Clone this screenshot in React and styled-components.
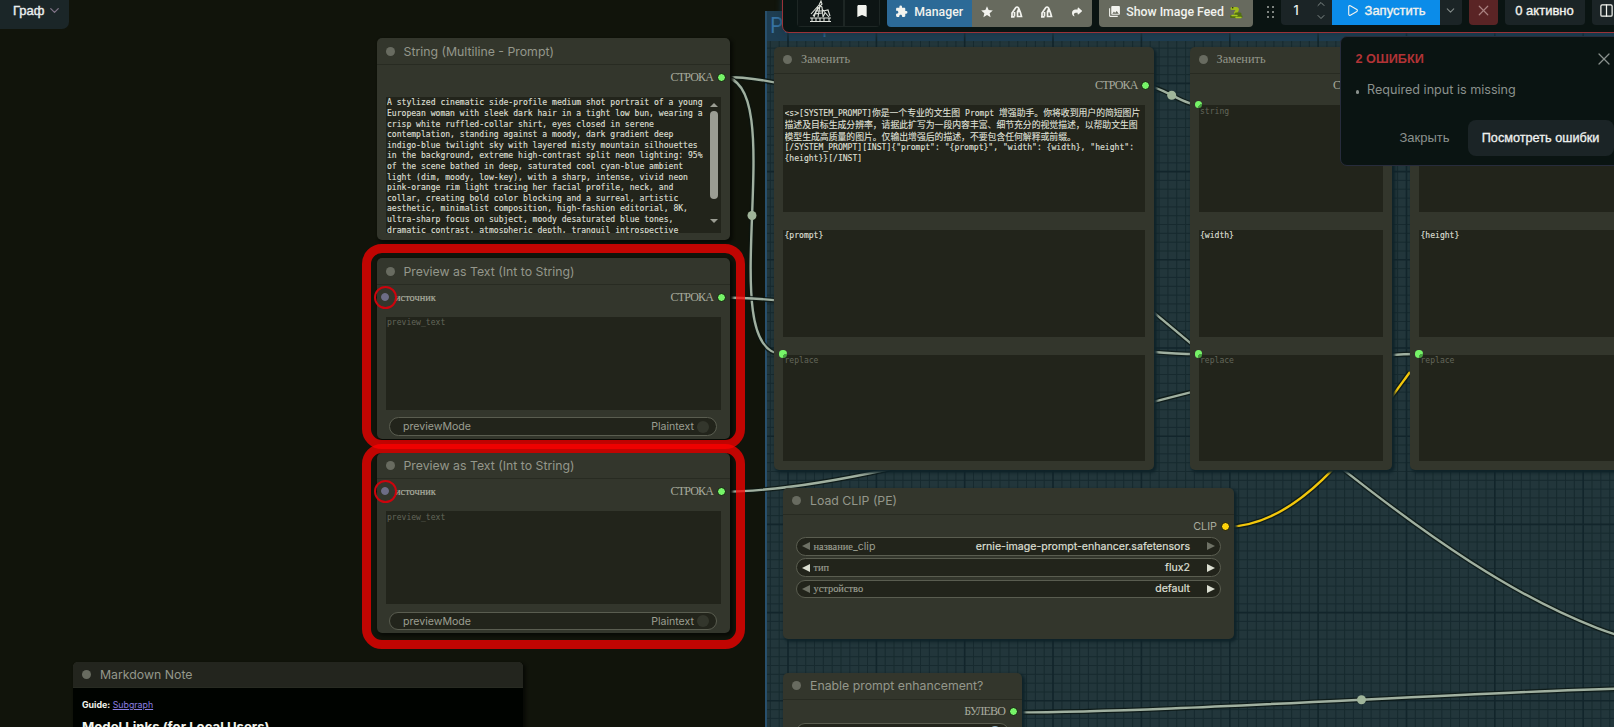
import React from 'react';
import styled, { createGlobalStyle, css } from 'styled-components';
import { ChevronDown, ChevronUp, Columns2, Play, X } from 'lucide-react';
import { MdBookmark, MdExtension, MdPhotoLibrary, MdStar } from 'react-icons/md';
import { FaShare } from 'react-icons/fa6';

const GlobalStyle = createGlobalStyle`
  * {
    box-sizing: border-box;
  }

  body {
    margin: 0;
    overflow: hidden;
    background: #11140b;
    font-family: Inter, 'Liberation Sans', sans-serif;
  }
`;

const Canvas = styled.main`
  position: relative;
  width: 1614px;
  height: 727px;
  overflow: hidden;
  background: #11140b;
`;

// free canvas: group, links and nodes sit at their graph coordinates
const Group = styled.section`
  position: absolute;
  left: 765px;
  top: 11px;
  right: 0;
  bottom: 0;
  border-left: 2px solid #28506d;
  background: #22363b;
`;

const GroupTitle = styled.h2`
  height: 30px;
  margin: 0;
  padding-left: 3px;
  background: #1e3d51;
  color: #3672a2;
  font-size: 21px;
  font-weight: 400;
  line-height: 29px;
`;

const Links = styled.svg`
  position: absolute;
  inset: 0;
`;

const Node = styled.section`
  position: absolute;
  left: ${props => props.$x}px;
  top: ${props => props.$y}px;
  width: ${props => props.$w}px;
  height: ${props => props.$h}px;
  border-radius: 5px;
  background: #33362c;
  box-shadow: 2px 2px 3px 1px ${props => (props.$inGroup ? '#0f2329' : '#090b06')};
`;

const NodeHeader = styled.header`
  display: flex;
  align-items: center;
  height: 26.5px;
  padding-left: 9px;
  gap: 9px;
  border-bottom: 1px solid #282b22;
  border-radius: 5px 5px 0 0;
  background: ${props => (props.$note ? '#23251e' : 'transparent')};
  color: #94978b;
  font-size: 12.3px;
  white-space: nowrap;

  &::before {
    content: '';
    width: 9px;
    height: 9px;
    border-radius: 50%;
    background: #686b60;
  }

  ${props =>
    props.$serif &&
    css`
      font-family: 'Liberation Serif', serif;
    `};
`;

const Slots = styled.div`
  position: relative;
  display: flex;
  align-items: center;
  justify-content: space-between;
  height: 24.5px;
  padding: 0 16.5px 0 18.5px;
  color: #a8ab9e;
  font-size: 10.8px;
`;

const InLabel = styled.span`
  font-family: 'Liberation Serif', serif;
  font-size: 10.4px;
  -webkit-text-stroke: 0.2px #a8ab9e;
`;

const OutLabel = styled.span`
  margin-left: auto;
  ${props =>
    !props.$latin &&
    css`
      font-family: 'Liberation Serif', serif;
      font-size: 12px;
      letter-spacing: -0.85px;
    `};
`;

const Port = styled.i`
  position: absolute;
  left: ${props => (props.$in ? '4.5px' : 'auto')};
  right: ${props => (props.$in ? 'auto' : '4px')};
  top: calc(50% - 4.5px);
  width: 9px;
  height: 9px;
  border: 1px solid #12150d;
  border-radius: 50%;
  background: ${props => props.$color || '#76f468'};
`;

const MutedPort = styled(Port)`
  border-color: #6d6d86;
  background: #6d6d86;
  width: 8px;
  height: 8px;
`;

const Fields = styled.div`
  display: flex;
  flex-direction: column;
  gap: 18px;
  padding: ${props => props.$top}px 9px 0;
`;

const Field = styled.div`
  position: relative;
  height: ${props => props.$h}px;
  padding: 1.5px 1px 0 1.5px;
  background: #22241b;
  color: ${props => (props.$empty ? '#63665a' : '#dcdfd2')};
  font-family: 'DejaVu Sans Mono', 'Noto Sans CJK SC', monospace;
  font-size: 8.07px;
  line-height: 10.6px;
  -webkit-text-stroke: ${props => (props.$empty ? '0' : '0.15px #dcdfd2')};
`;

const FieldText = styled.div`
  height: 100%;
  overflow: hidden;
  white-space: pre;
`;

const CjkLine = styled.div`
  height: 12.2px;
  font-family: 'Noto Sans CJK SC', sans-serif;
  font-size: 8.83px;
  line-height: 12.2px;
`;

const Latin = styled.span`
  font-family: 'DejaVu Sans Mono', monospace;
  font-size: 8.07px;
`;

const FieldPort = styled.i`
  position: absolute;
  left: -4px;
  top: -4.5px;
  width: 7.5px;
  height: 7.5px;
  border-radius: 50%;
  background: radial-gradient(circle at 90% 90%, #48a040 35%, #76f468 37%);
`;

const Scrollbar = styled.div`
  position: absolute;
  top: 0;
  right: 2px;
  bottom: 0;
  display: flex;
  flex-direction: column;
  align-items: center;
  width: 9px;
  padding-top: 6px;
`;

const ScrollArrow = styled.i`
  border: 4px solid transparent;
  border-top-width: 0;
  border-bottom: 4.5px solid #9b9d93;
  transform: ${props => (props.$down ? 'rotate(180deg)' : 'none')};
`;

const Thumb = styled.i`
  width: 8.5px;
  height: 88px;
  margin: 4.5px 0 20px;
  border-radius: 5px;
  background: #9b9d93;
`;

const Widgets = styled.div`
  display: flex;
  flex-direction: column;
  gap: 2.8px;
  margin-top: ${props => props.$top}px;
  padding: 0 12.5px;
`;

const Pill = styled.div`
  position: relative;
  display: flex;
  align-items: center;
  height: 18.3px;
  padding: ${props => (props.$combo ? '0 5px' : '0 7px 0 13px')};
  border: 1px solid #5a5d50;
  border-radius: 10px;
  background: #22241b;
  color: #9b9e91;
  font-size: 10.6px;
`;

const PillLabel = styled.span`
  flex: 1;
`;

const Serif = styled.span`
  font-family: 'Liberation Serif', serif;
  font-size: 10.4px;
  -webkit-text-stroke: 0.15px #9b9e91;
`;

const PillValue = styled.span`
  color: ${props => (props.$bright ? '#dcdfd2' : '#9b9e91')};
  -webkit-text-stroke: ${props => (props.$bright ? '0.2px #dcdfd2' : '0')};
  margin-right: ${props => (props.$bright ? '17px' : '3px')};
`;

const Knob = styled.i`
  width: 12px;
  height: 12px;
  border-radius: 50%;
  background: ${props => (props.$on ? '#8cabbd' : '#33362c')};
`;

const Arrow = styled.i`
  border: 4.3px solid transparent;
  border-width: 4.3px 0;
  ${props =>
    props.$left
      ? css`
          border-right: 8.5px solid ${props.$dim ? '#6e7165' : '#dcdfd2'};
          margin-right: 4px;
        `
      : css`
          border-left: 8.5px solid ${props.$dim ? '#6e7165' : '#dcdfd2'};
        `};
`;

const Frame = styled.div`
  position: absolute;
  left: 362px;
  top: ${props => props.$y}px;
  width: 383px;
  height: 205px;
  border: 9px solid rgba(255, 0, 0, 0.74);
  border-radius: 20px;
`;

const Ring = styled.div`
  position: absolute;
  left: 374px;
  top: ${props => props.$y}px;
  width: 23px;
  height: 23px;
  border: 2px solid #cc040d;
  border-radius: 50%;
`;

const NoteBody = styled.div`
  height: 60px;
  padding: 9.5px 9px;
  background: #000300;
  color: #f1f3ec;
  font-size: 8.8px;
  line-height: 13px;

  a {
    color: #8a7fe0;
  }

  h1 {
    margin: 8.5px 0 0;
    font-size: 13.2px;
    line-height: 16px;
    white-space: nowrap;
  }
`;

const GraphTab = styled.button`
  position: absolute;
  left: 0;
  top: 0;
  display: flex;
  align-items: center;
  gap: 3px;
  width: 69px;
  height: 29px;
  padding: 0 0 8px 13px;
  border: 0;
  border-radius: 0 0 7px 0;
  background: #1b2628;
  color: #e9eeee;
  font: 13px 'Liberation Sans', sans-serif;
  -webkit-text-stroke: 0.4px #e9eeee;
`;

const Toolbar = styled.nav`
  position: absolute;
  left: 782px;
  top: -5px;
  display: flex;
  width: 850px;
  height: 38px;
  padding: 0 0 0 14px;
  border: 1px solid #9a3238;
  border-radius: 0 0 0 7px;
  background: #0a1412;
  box-shadow: 0 2px 6px #193748;
`;

const BarGroup = styled.div`
  display: flex;
  height: ${props => props.$h || 31}px;
  margin-right: ${props => props.$gap || 7}px;
  border-radius: 0 0 4px 4px;
  overflow: hidden;
`;

const BarButton = styled.button`
  display: flex;
  align-items: center;
  justify-content: center;
  gap: ${props => props.$gap || 6}px;
  width: ${props => props.$w}px;
  padding: 0;
  border: 0;
  background: ${props => props.$bg || '#0d1514'};
  color: ${props => props.$color || '#f2f3ee'};
  font: ${props => (props.$ru ? "13px 'Liberation Sans', sans-serif" : '500 12.3px Roboto, sans-serif')};
  white-space: nowrap;
  -webkit-text-stroke: ${props => (props.$ru ? '0.35px currentColor' : '0')};

  svg {
    flex: none;
  }
`;

const DarkButton = styled(BarButton)`
  border: 1px solid #1d2624;
  border-top: 0;
`;

const Handle = styled.div`
  display: grid;
  grid-template-columns: 2px 2px;
  grid-auto-rows: 2px;
  gap: 3px;
  align-content: center;
  justify-content: center;
  width: 20px;
  height: 31px;

  i {
    background: #7d837f;
  }
`;

const Counter = styled.div`
  display: flex;
  align-items: center;
  width: 51px;
  padding: 0 5px 0 13px;
  justify-content: space-between;
  background: #1b2426;
  color: #eff2f0;
  font-size: 12.5px;
  font-weight: 500;
`;

const Steps = styled.div`
  display: flex;
  flex-direction: column;
  gap: 1px;
  color: #818a88;
`;

const Toast = styled.aside`
  position: absolute;
  left: 1340px;
  top: 36px;
  display: flex;
  flex-direction: column;
  width: 290px;
  height: 130px;
  padding: 13.5px 15px 0 14.5px;
  border: 1px solid #272c3c;
  border-radius: 7px;
  background: #0a1412;
  color: #8a918d;
`;

const ToastHead = styled.div`
  display: flex;
  align-items: center;
  justify-content: space-between;
  height: 17px;
  color: #8a918d;

  strong {
    color: #b23336;
    font: bold 12.7px 'Liberation Sans', sans-serif;
  }
`;

const ToastItem = styled.div`
  display: flex;
  align-items: center;
  gap: 8px;
  height: 16px;
  margin-top: 14px;
  font-size: 12.6px;

  &::before {
    content: '';
    width: 3.5px;
    height: 3.5px;
    margin-top: 5px;
    border-radius: 50%;
    background: #8a918d;
    flex: none;
  }
`;

const ToastActions = styled.div`
  display: flex;
  align-items: center;
  gap: 18px;
  margin: 22px 0 0 44px;
  font: 13px 'Liberation Sans', sans-serif;
`;

const ToastButton = styled.button`
  flex: none;
  width: 146px;
  height: 36px;
  padding: 0;
  border: 0;
  border-radius: 8px;
  background: #1b2426;
  color: #eff2f0;
  font: 12.7px 'Liberation Sans', sans-serif;
  white-space: nowrap;
  -webkit-text-stroke: 0.3px #eff2f0;
`;

const PROMPT = `A stylized cinematic side-profile medium shot portrait of a young
European woman with sleek dark hair in a tight low bun, wearing a
crisp white ruffled-collar shirt, eyes closed in serene
contemplation, standing against a moody, dark gradient deep
indigo-blue twilight sky with layered misty mountain silhouettes
in the background, extreme high-contrast split neon lighting: 95%
of the scene bathed in deep, saturated cool cyan-blue ambient
light (dim, moody, low-key), with a sharp, intense, vivid neon
pink-orange rim light tracing her facial profile, neck, and
collar, creating bold color blocking and a surreal, artistic
aesthetic, minimalist composition, high-fashion editorial, 8K,
ultra-sharp focus on subject, moody desaturated blue tones,
dramatic contrast, atmospheric depth, tranquil introspective`;

const SYSTEM_LINES = [
  ['<s>[SYSTEM_PROMPT]', '你是一个专业的文生图', ' Prompt ', '增强助手。你将收到用户的简短图片'],
  ['', '描述及目标生成分辨率，请据此扩写为一段内容丰富、细节充分的视觉描述，以帮助文生图'],
  ['', '模型生成高质量的图片。仅输出增强后的描述，不要包含任何解释或前缀。'],
];

const WIRES = [
  'M722 77C1030 77 1400 653 1720 653',
  'M722 77C793 77 711 354 782.5 354',
  'M722 297.5C842 297.5 1078 354 1197.5 354',
  'M722 491.7C908 491.7 1241 354 1418.5 354',
  'M1146 85.6C1160 85.6 1184 105 1197.5 105',
  'M1013 712.4C1188 712.4 1535 687 1710 687',
];

// every tenth line of the grid is a stronger one
const gridPath = major => {
  const parts = [];
  for (let i = -2; i < 94; i++) {
    if ((i % 10 === 0) === major) parts.push(`M${(788 + i * 8.835).toFixed(1)} ${major ? 33 : 41}V727`);
  }
  for (let i = -4; i < 73; i++) {
    if ((i % 10 === 0) === major) parts.push(`M767 ${(83.4 + i * 8.82).toFixed(1)}H1614`);
  }
  return parts.join('');
};

const Wire = ({ d, color = '#a0b0a0' }) => (
  <g fill="none">
    <path d={d} stroke="#0b1612" strokeOpacity="0.75" strokeWidth="5" />
    <path d={d} stroke={color} strokeWidth="2.4" />
  </g>
);

const PumpIcon = () => (
  <svg width="23" height="23" viewBox="0 0 23 23" fill="none" stroke="#dfe3dc" strokeWidth="1.1">
    <path d="M2 14L10 5l2-4 1 3-2 2-7 10M10 5l3 2 1 10M9 7L5 17M11 6l-2 11M6 11h7M5 14l8-1M13 9l7 8M14 11l5-1 2 6M16 13l-2 4" />
    <path d="M1 18h21M1 21.5h21M3 18v3.5M7 18v3.5M11 18v3.5M15 18v3.5M20 18v3.5" />
  </svg>
);

const CleanIcon = () => (
  <svg width="13" height="13" viewBox="0 0 13 13" fill="none" stroke="#f2f3ee" strokeWidth="1.7">
    <path d="M1 11.8h3.5M2 11V8l3.5-5q1.5-2 3 0 2 4 3 8.5H7.5V6M4.5 7v4.5M8 4.5v3" />
  </svg>
);

const SnakeIcon = () => (
  <svg width="14" height="14" viewBox="0 0 14 14" fill="none" strokeLinecap="round">
    <path d="M3 3.5h4q2 0 1 2L6.5 8" stroke="#9fbc1c" strokeWidth="3.2" />
    <path d="M7 9h4M2.5 11.5H12" stroke="#526f12" strokeWidth="3.2" />
    <path d="M3 10.5h5M7 12.5h5" stroke="#a8c820" strokeWidth="1.4" />
    <circle cx="3.7" cy="2.8" r="0.8" fill="#20260c" />
  </svg>
);

const PreviewNode = ({ y }) => (
  <Node $x={376.5} $y={y} $w={353} $h={180.5}>
    <NodeHeader>Preview as Text (Int to String)</NodeHeader>
    <Slots>
      <MutedPort $in />
      <InLabel>источник</InLabel>
      <OutLabel>СТРОКА</OutLabel>
      <Port />
    </Slots>
    <Fields $top={7.5}>
      <Field $h={93} $empty>preview_text</Field>
    </Fields>
    <Widgets $top={7.7}>
      <Pill>
        <PillLabel>previewMode</PillLabel>
        <PillValue>Plaintext</PillValue>
        <Knob />
      </Pill>
    </Widgets>
  </Node>
);

const ReplaceNode = ({ x, w, find, children }) => (
  <Node $x={x} $y={47} $w={w} $h={423} $inGroup>
    <NodeHeader $serif>Заменить</NodeHeader>
    <Slots>
      <OutLabel>СТРОКА</OutLabel>
      <Port />
    </Slots>
    <Fields $top={7}>
      {children}
      <Field $h={107}>{find}</Field>
      <Field $h={106.5} $empty>
        <FieldPort />
        replace
      </Field>
    </Fields>
  </Node>
);

const Combo = ({ label, suffix, value, dimLeft, dimRight }) => (
  <Pill $combo>
    <Arrow $left $dim={dimLeft} />
    <PillLabel>
      <Serif>{label}</Serif>
      {suffix}
    </PillLabel>
    <PillValue $bright>{value}</PillValue>
    <Arrow $dim={dimRight} />
  </Pill>
);

const TopBar = () => (
  <Toolbar>
    <BarGroup>
      <DarkButton $w={47}>
        <PumpIcon />
      </DarkButton>
      <DarkButton $w={36}>
        <MdBookmark size={16} />
      </DarkButton>
    </BarGroup>
    <BarGroup>
      <BarButton $w={84.5} $bg="#2c6a97">
        <MdExtension size={13} />
        Manager
      </BarButton>
      <BarButton $w={30} $bg="#676a5e">
        <MdStar size={14} />
      </BarButton>
      <BarButton $w={30} $bg="#676a5e">
        <CleanIcon />
      </BarButton>
      <BarButton $w={30} $bg="#676a5e">
        <CleanIcon />
      </BarButton>
      <BarButton $w={30} $bg="#676a5e">
        <FaShare size={10} />
      </BarButton>
    </BarGroup>
    <BarGroup $gap={8}>
      <BarButton $w={154} $bg="#676a5e" $gap={5}>
        <MdPhotoLibrary size={13} />
        Show Image Feed
        <SnakeIcon />
      </BarButton>
    </BarGroup>
    <Handle>
      {[0, 1, 2, 3, 4, 5].map(i => (
        <i key={i} />
      ))}
    </Handle>
    <BarGroup $h={29}>
      <Counter>
        1
        <Steps>
          <ChevronUp size={12} />
          <ChevronDown size={12} />
        </Steps>
      </Counter>
      <BarButton $w={108} $bg="#0b8ce9" $ru>
        <Play size={13} />
        Запустить
      </BarButton>
      <BarButton $w={22} $bg="#1b2426" $color="#818a88">
        <ChevronDown size={13} />
      </BarButton>
    </BarGroup>
    <BarGroup $h={29}>
      <BarButton $w={29} $bg="#5a2425" $color="#a98280">
        <X size={17} strokeWidth={1.7} />
      </BarButton>
    </BarGroup>
    <BarGroup $h={29}>
      <BarButton $w={80} $bg="#1b2426" $ru>
        0 активно
      </BarButton>
    </BarGroup>
    <BarGroup $h={29}>
      <BarButton $w={30} $bg="#1b2426">
        <Columns2 size={15} />
      </BarButton>
    </BarGroup>
  </Toolbar>
);

export default function App() {
  return (
    <Canvas>
      <GlobalStyle />
      <Group>
        <GroupTitle>Prompt</GroupTitle>
      </Group>
      <Links width="1614" height="727">
        <path d={gridPath(false)} stroke="#172a2f" strokeWidth="1" />
        <path d={gridPath(true)} stroke="#12252b" strokeWidth="1.6" />
        {WIRES.map(d => (
          <Wire key={d} d={d} />
        ))}
        <Wire d="M1225 527C1300 527 1358 443 1410 372" color="#f3c70c" />
        <g fill="#a0b59a">
          <circle cx="752" cy="215.5" r="4.5" />
          <circle cx="1171.7" cy="95.3" r="4.5" />
          <circle cx="1361.5" cy="699.7" r="4.5" />
        </g>
      </Links>

      <Node $x={376.5} $y={38.3} $w={353} $h={202.2}>
        <NodeHeader>String (Multiline - Prompt)</NodeHeader>
        <Slots>
          <OutLabel>СТРОКА</OutLabel>
          <Port />
        </Slots>
        <Fields $top={7.7}>
          <Field $h={136}>
            <FieldText>{PROMPT}</FieldText>
            <Scrollbar>
              <ScrollArrow />
              <Thumb />
              <ScrollArrow $down />
            </Scrollbar>
          </Field>
        </Fields>
      </Node>
      <PreviewNode y={258.3} />
      <PreviewNode y={452.7} />

      <ReplaceNode x={774} w={380} find="{prompt}">
        <Field $h={106.5}>
          <FieldText>
            {SYSTEM_LINES.map(parts => (
              <CjkLine key={parts[1]}>
                {parts.map((part, i) => (i % 2 ? part : <Latin key={i}>{part}</Latin>))}
              </CjkLine>
            ))}
            {'[/SYSTEM_PROMPT][INST]{"prompt": "{prompt}", "width": {width}, "height":\n{height}}[/INST]'}
          </FieldText>
        </Field>
      </ReplaceNode>
      <ReplaceNode x={1189.5} w={202.5} find="{width}">
        <Field $h={106.5} $empty>
          <FieldPort />
          string
        </Field>
      </ReplaceNode>
      <ReplaceNode x={1410} w={260} find="{height}">
        <Field $h={106.5} $empty />
      </ReplaceNode>

      <Node $x={783} $y={488} $w={450.5} $h={150.5} $inGroup>
        <NodeHeader>Load CLIP (PE)</NodeHeader>
        <Slots>
          <OutLabel $latin>CLIP</OutLabel>
          <Port $color="#ffd20a" />
        </Slots>
        <Widgets $top={-1.7}>
          <Combo label="название" suffix="_clip" value="ernie-image-prompt-enhancer.safetensors" dimLeft dimRight />
          <Combo label="тип" value="flux2" />
          <Combo label="устройство" value="default" dimLeft />
        </Widgets>
      </Node>
      <Node $x={783} $y={673.2} $w={238.5} $h={90} $inGroup>
        <NodeHeader>Enable prompt enhancement?</NodeHeader>
        <Slots>
          <OutLabel>БУЛЕВО</OutLabel>
          <Port />
        </Slots>
        <Widgets $top={-1.5}>
          <Pill>
            <PillLabel />
            <Knob $on />
          </Pill>
        </Widgets>
      </Node>
      <Node $x={73} $y={661.5} $w={450} $h={90}>
        <NodeHeader $note>Markdown Note</NodeHeader>
        <NoteBody>
          <b>Guide:</b> <a href="#subgraph">Subgraph</a>
          <h1>Model Links (for Local Users)</h1>
        </NoteBody>
      </Node>

      <Frame $y={244} />
      <Frame $y={444} />
      <Ring $y={286} />
      <Ring $y={480.3} />

      <GraphTab>
        Граф
        <ChevronDown size={15} color="#817488" />
      </GraphTab>
      <TopBar />
      <Toast>
        <ToastHead>
          <strong>2 ОШИБКИ</strong>
          <X size={20} strokeWidth={1.5} />
        </ToastHead>
        <ToastItem>Required input is missing</ToastItem>
        <ToastActions>
          Закрыть
          <ToastButton>Посмотреть ошибки</ToastButton>
        </ToastActions>
      </Toast>
    </Canvas>
  );
}
